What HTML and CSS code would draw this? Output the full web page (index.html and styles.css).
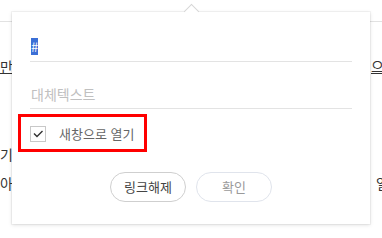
FILE: index.html
```html
<!DOCTYPE html>
<html lang="ko">
<head>
<meta charset="utf-8">
<link rel="stylesheet" href="styles.css">
</head>
<body>
<div class="doc">
  <div class="rule"></div>
  <div class="line l1"><span class="u">만들어 보세요</span><span class="u">으로</span></div>
  <div class="line l3"><span>기능을</span><span></span></div>
  <div class="line l4"><span>아니라</span><span>얼마</span></div>
</div>
<div class="popup">
  <span class="arrow"></span>
  <div class="field"><span class="sel">#</span></div>
  <div class="field field2"><span class="ph">대체텍스트</span></div>
  <div class="check-row">
    <span class="box"><svg width="16" height="16" viewBox="0 0 16 16"><path d="M4 7.5 L7 10.5 L12.5 5" fill="none" stroke="#333" stroke-width="1.4"/></svg></span>
    <span class="label">새창으로 열기</span>
  </div>
  <div class="buttons">
    <button class="btn unlink">링크해제</button>
    <button class="btn ok">확인</button>
  </div>
</div>
</body>
</html>
```
FILE: styles.css
```css
html, body {
  margin: 0;
  padding: 0;
  background: #fff;
}
body {
  width: 382px;
  height: 238px;
  overflow: hidden;
  position: relative;
  font-family: "Noto Sans CJK KR", "Noto Sans", sans-serif;
}
.doc {
  padding-top: 21px;
}
.rule {
  height: 1px;
  background: #e2e2e2;
}
.line {
  display: grid;
  grid-template-columns: 371px 11px;
  white-space: nowrap;
  overflow: hidden;
  font-size: 14px;
  line-height: 20px;
  color: #333;
}
.line span {
  overflow: hidden;
}
.u {
  text-decoration: underline;
}
.l1 { margin-top: 34px; }
.l3 { margin-top: 68px; }
.l4 { margin-top: 9px; grid-template-columns: 376px 6px; }

.popup {
  position: absolute;
  left: 12px;
  top: 12px;
  width: 358px;
  height: 212px;
  box-sizing: border-box;
  padding: 25px 18px 22px 18px;
  background: #fff;
  box-shadow: 0 0 0 1px rgba(0,0,0,0.04), 0 1px 4px rgba(0,0,0,0.13);
}
.arrow {
  position: absolute;
  left: 174px;
  top: -6px;
  width: 10px;
  height: 10px;
  background: #fff;
  border-top: 1px solid #d6d6d6;
  border-left: 1px solid #d6d6d6;
  transform: rotate(45deg);
}
.field {
  height: 18px;
  line-height: 18px;
  padding: 0 0 6px 1px;
  border-bottom: 1px solid #e3e3e3;
  font-size: 13px;
  color: #333;
}
.sel {
  display: inline-block;
  background: #3b6fd6;
  color: #fff;
  line-height: 17px;
  margin-top: 1px;
}
.field2 {
  margin-top: 23px;
  padding-bottom: 5px;
  font-size: 14px;
}
.ph {
  color: #c0c0c0;
}
.check-row {
  margin: 5px 0 0 -12px;
  width: 129px;
  height: 38px;
  box-sizing: border-box;
  border: 3px solid #ff0000;
  padding-left: 9px;
  display: flex;
  align-items: center;
}
.box {
  width: 16px;
  height: 16px;
  box-sizing: border-box;
  border: 1px solid #c8c8c8;
  display: flex;
  margin-top: 2px;
}
.box svg {
  margin: -1px;
}
.label {
  margin-left: 13px;
  font-size: 13px;
  color: #666;
  margin-top: 1px;
}
.buttons {
  margin-top: 20px;
  display: flex;
  justify-content: center;
  gap: 10px;
}
.btn {
  width: 76px;
  height: 30px;
  border-radius: 15px;
  background: #fff;
  font-family: "Noto Sans CJK KR", "Noto Sans", sans-serif;
  font-size: 13px;
  padding: 0;
  line-height: 28px;
}
.unlink {
  border: 1px solid #cfcfcf;
  color: #444;
}
.ok {
  border: 1px solid #e0e4ec;
  color: #9a9a9a;
}
```
